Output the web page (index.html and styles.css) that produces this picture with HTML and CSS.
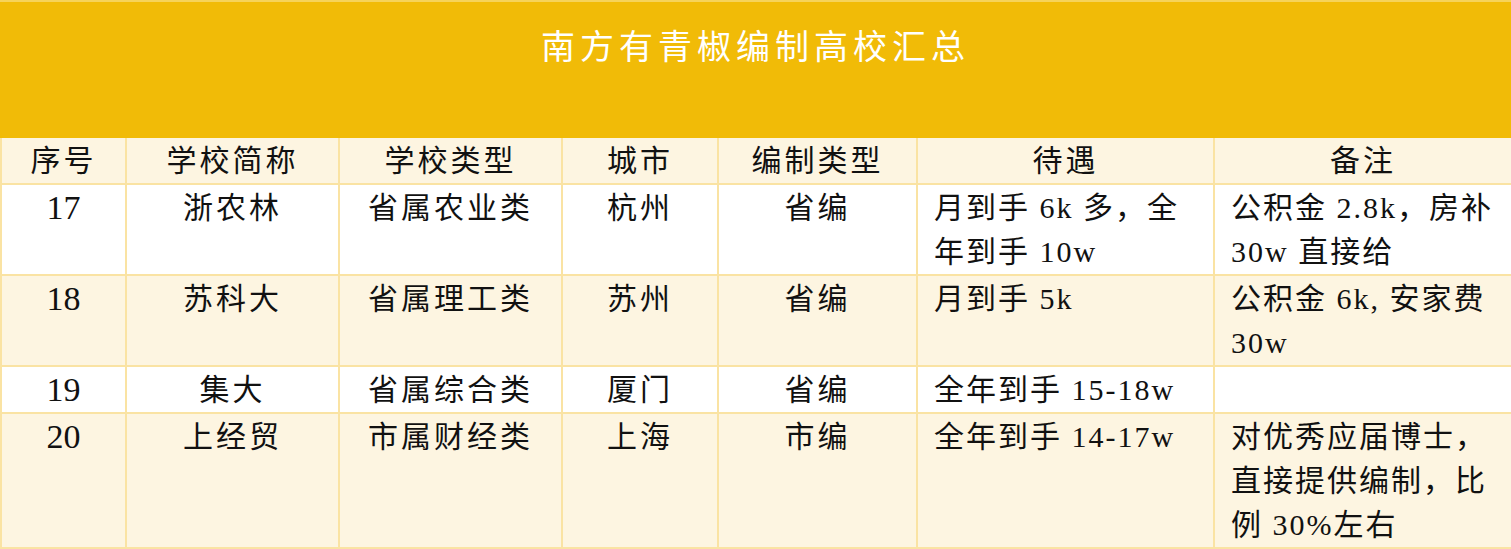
FILE: index.html
```html
<!DOCTYPE html>
<html lang="zh-CN">
<head>
<meta charset="utf-8">
<title>南方有青椒编制高校汇总</title>
<link rel="stylesheet" href="styles.css">
</head>
<body>
<div class="sheet">
  <div class="banner"><h1 class="title">南方有青椒编制高校汇总</h1></div>
  <table class="grid">
    <colgroup>
      <col class="c1"><col class="c2"><col class="c3"><col class="c4"><col class="c5"><col class="c6"><col class="c7">
    </colgroup>
    <thead>
      <tr class="head">
        <th>序号</th><th>学校简称</th><th>学校类型</th><th>城市</th><th>编制类型</th><th>待遇</th><th>备注</th>
      </tr>
    </thead>
    <tbody>
      <tr class="odd">
        <td class="num">17</td><td>浙农林</td><td>省属农业类</td><td>杭州</td><td>省编</td>
        <td class="txt">月到手 6k 多，全<br>年到手 10w</td>
        <td class="txt">公积金 2.8k，房补<br>30w 直接给</td>
      </tr>
      <tr class="even">
        <td class="num">18</td><td>苏科大</td><td>省属理工类</td><td>苏州</td><td>省编</td>
        <td class="txt">月到手 5k</td>
        <td class="txt">公积金 6k, 安家费<br>30w</td>
      </tr>
      <tr class="odd">
        <td class="num">19</td><td>集大</td><td>省属综合类</td><td>厦门</td><td>省编</td>
        <td class="txt">全年到手 15-18w</td>
        <td class="txt"></td>
      </tr>
      <tr class="even">
        <td class="num">20</td><td>上经贸</td><td>市属财经类</td><td>上海</td><td>市编</td>
        <td class="txt">全年到手 14-17w</td>
        <td class="txt">对优秀应届博士，<br>直接提供编制，比<br>例 30%左右</td>
      </tr>
    </tbody>
  </table>
</div>
</body>
</html>
```

FILE: styles.css
```css
html, body {
  margin: 0;
  padding: 0;
  background: #ffffff;
}
body {
  font-family: "Liberation Serif", "Noto Sans CJK SC", serif;
  color: #111;
  overflow: hidden;
}
.sheet {
  width: 1511px;
}
.banner {
  height: 138px;
  background: #f1bb07;
  border-top: 2px solid #f6d35a;
  box-sizing: border-box;
  padding-top: 26px;
}
.title {
  margin: 0;
  text-align: center;
  color: #ffffff;
  font-weight: normal;
  font-size: 34px;
  line-height: 40px;
  letter-spacing: 5px;
}
.grid {
  width: 1511px;
  border-collapse: collapse;
  table-layout: fixed;
}
.c1 { width: 125px; }
.c2 { width: 213px; }
.c3 { width: 223px; }
.c4 { width: 156px; }
.c5 { width: 199px; }
.c6 { width: 297px; }
.c7 { width: 298px; }
.grid th, .grid td {
  border: 2px solid #fae3a3;
  font-weight: normal;
  font-size: 30px;
  line-height: 44px;
  letter-spacing: 3px;
  padding: 1px 4px 0;
  text-align: center;
  vertical-align: top;
  white-space: nowrap;
}
.grid thead th {
  border-top: none;
}
.head { background: #fdf5e1; }
.odd { background: #ffffff; }
.even { background: #fdf5e1; }
.grid .num {
  font-size: 34px;
  letter-spacing: 0;
}
.grid .txt {
  text-align: left;
  letter-spacing: 2px;
  padding-left: 16px;
  padding-right: 0;
}
```
